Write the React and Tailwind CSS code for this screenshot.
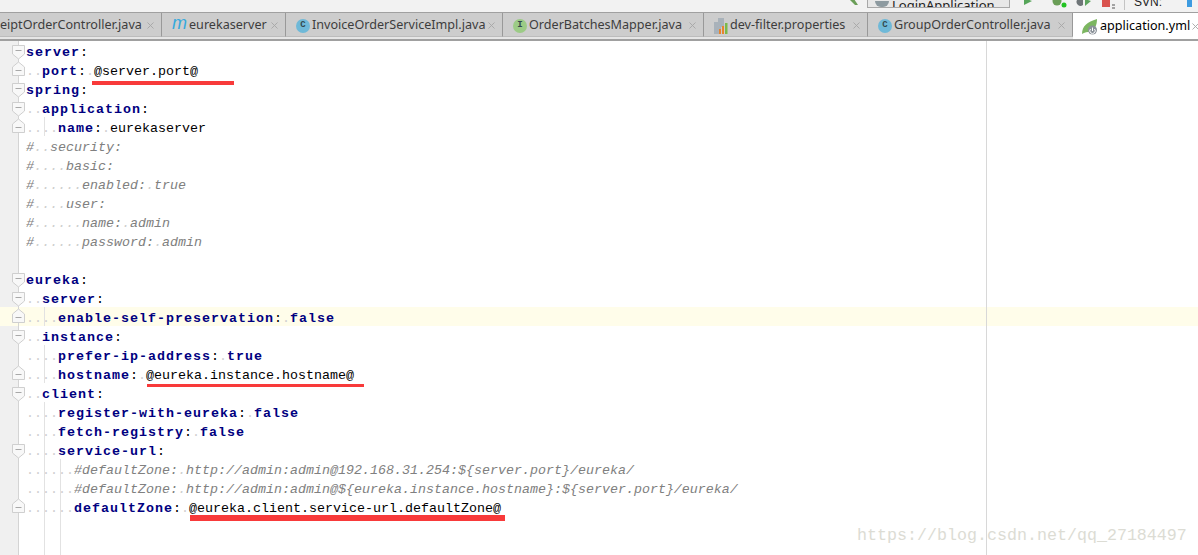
import { X } from "lucide-react";

const tabs = [
  { label: "eiptOrderController.java", width: "w-[162px]", icon: null },
  { label: "eurekaserver", width: "w-[124px]", icon: "m" },
  { label: "InvoiceOrderServiceImpl.java", width: "w-[217px]", icon: "c" },
  { label: "OrderBatchesMapper.java", width: "w-[201px]", icon: "i" },
  { label: "dev-filter.properties", width: "w-[164px]", icon: "props" },
  { label: "GroupOrderController.java", width: "w-[205px]", icon: "c" },
  { label: "application.yml", width: "w-[125px]", icon: "spring", active: true },
];

// fold: "open" points down, "close" points up
const rows = [
  { key: "server", fold: "open" },
  { indent: 2, key: "port", value: "@server.port@", fold: "close" },
  { key: "spring", fold: "open" },
  { indent: 2, key: "application", fold: "open" },
  { indent: 4, key: "name", value: "eurekaserver", fold: "close" },
  { comment: "#  security:" },
  { comment: "#    basic:" },
  { comment: "#      enabled: true" },
  { comment: "#    user:" },
  { comment: "#      name: admin" },
  { comment: "#      password: admin" },
  {},
  { key: "eureka", fold: "open" },
  { indent: 2, key: "server", fold: "open" },
  { indent: 4, key: "enable-self-preservation", literal: "false", fold: "close", current: true },
  { indent: 2, key: "instance", fold: "open" },
  { indent: 4, key: "prefer-ip-address", literal: "true" },
  { indent: 4, key: "hostname", value: "@eureka.instance.hostname@", fold: "close" },
  { indent: 2, key: "client", fold: "open" },
  { indent: 4, key: "register-with-eureka", literal: "false" },
  { indent: 4, key: "fetch-registry", literal: "false" },
  { indent: 4, key: "service-url", fold: "open" },
  { indent: 6, comment: "#defaultZone: http://admin:admin@192.168.31.254:${server.port}/eureka/" },
  { indent: 6, comment: "#defaultZone: http://admin:admin@${eureka.instance.hostname}:${server.port}/eureka/" },
  { indent: 6, key: "defaultZone", value: "@eureka.client.service-url.defaultZone@", fold: "close" },
];

function Dots({ count }) {
  return <span className="text-[#d0d0d0]">{".".repeat(count)}</span>;
}

function TabIcon({ type }) {
  if (type === "c" || type === "i") {
    const bg = type === "c" ? "bg-[#6fb9d8]" : "bg-[#9ccb86]";
    return (
      <span className={`w-[14px] h-[14px] rounded-full ${bg} flex items-center justify-center text-[9px] font-bold leading-none text-[#33494f] font-['Liberation_Mono',monospace]`}>
        {type === "c" ? "C" : "I"}
      </span>
    );
  }
  if (type === "m") {
    return <span className="w-[15px] text-[18px] leading-none -mt-[5px] italic text-[#35a9dd] font-['Liberation_Sans',sans-serif]">m</span>;
  }
  if (type === "props") {
    return (
      <svg width="14" height="16" viewBox="0 0 14 16">
        <path d="M0 4 L4 4 L4 0 L10 0 L10 9 L7 9 L7 16 L0 16 Z" fill="#a9b2ba" />
        <rect x="5" y="11" width="2" height="5" fill="#e8842c" />
        <rect x="8" y="8" width="2" height="8" fill="#e8842c" />
        <rect x="11" y="5" width="2.5" height="11" fill="#7cb94a" />
      </svg>
    );
  }
  if (type === "spring") {
    return (
      <svg width="16" height="16" viewBox="0 0 16 16">
        <path d="M0 15 C0 7 5 3 15 0 C15 6 13 12 6 13 C3 13 2 14 0 15 Z" fill="#7cb661" />
        <circle cx="10.5" cy="11" r="4.5" fill="#8b9299" />
        <path d="M10.5 8.5 V12 M8.5 10 A2.7 2.7 0 1 0 12.5 10" stroke="#fff" strokeWidth="1" fill="none" />
      </svg>
    );
  }
  return null;
}

function Tab({ tab }) {
  const look = tab.active
    ? "bg-white text-black h-[26px] pt-[1px]"
    : "bg-[#cdcdcd] text-[#3d3d3d] border-r border-[#999999] border-b border-b-[#bcbcbc] h-[24px] pt-[2px]";
  return (
    <div className={`${tab.width} ${look} shrink-0 flex items-center overflow-hidden`}>
      {tab.icon && (
        <span className={`${tab.active ? "ml-[9px]" : "ml-[10px]"} mr-[2px] flex items-center`}>
          <TabIcon type={tab.icon} />
        </span>
      )}
      <span className="whitespace-nowrap">{tab.label}</span>
      <X size={11} strokeWidth={2} className="ml-auto mr-[5px] shrink-0 text-[#a6a6a6]" />
    </div>
  );
}

function Toolbar() {
  return (
    <div className="h-[12px] bg-[#f2f2f2] border-b border-[#a0a0a0] box-content overflow-hidden flex items-start pl-[848px]">
      <svg width="12" height="8" viewBox="0 0 12 8" className="mt-[-2px]">
        <path d="M1 1 L7 7 L10 7 L6 1 Z" fill="#6b9e58" />
      </svg>
      <div className="ml-[7px] w-[143px] h-[9px] -mt-[1px] border border-[#a8a8a8] bg-[#e8e8e8] flex items-end overflow-hidden pl-[7px]">
        <span className="w-[14px] h-[6px] bg-[#8d9aa0] rounded-b-full" />
        <span className="ml-[3px] text-[13px] leading-[16px] -mb-[6px] text-[#222] whitespace-nowrap">LoginApplication</span>
      </div>
      <svg width="10" height="6" viewBox="0 0 10 6" className="ml-[13px]">
        <path d="M1 -2 L9 1 L1 5 Z" fill="#56a559" />
      </svg>
      <svg width="18" height="8" viewBox="0 0 18 8" className="ml-[18px]">
        <circle cx="6" cy="1" r="4.5" fill="#6b9e58" />
        <circle cx="13" cy="5" r="2.5" fill="#22c322" />
      </svg>
      <svg width="16" height="7" viewBox="0 0 16 7" className="ml-[7px]">
        <path d="M1 0 A4 4 0 0 0 7 5 L7 0 Z" fill="#6f7578" />
        <path d="M9 -1 L15 1 L9 6 Z" fill="#5da45e" />
      </svg>
      <svg width="14" height="9" viewBox="0 0 14 9" className="ml-[10px]">
        <rect x="0" y="0" width="8" height="7" fill="#d9534f" />
        <path d="M10 5 H13 M10 8 H13" stroke="#555" strokeWidth="1" />
      </svg>
      <span className="ml-[8px] w-px h-[10px] bg-[#c4c4c4]" />
      <span className="ml-[9px] text-[12px] leading-[10px] -mt-[3px] text-[#222] font-['Liberation_Sans',sans-serif]">SVN:</span>
      <span className="ml-[25px] w-[5px] h-[7px] bg-[#3d9be0]" />
    </div>
  );
}

function FoldMark({ fold }) {
  if (fold === "open") {
    return (
      <svg width="13" height="15" viewBox="0 0 13 15" className="absolute left-[12px] top-[4px]">
        <path d="M0.5 0.5 H12.5 V9 L6.5 14 L0.5 9 Z" fill="#f8f8f8" stroke="#cfcfcf" />
        <path d="M3.5 5.5 H9.5" stroke="#a8a8a8" />
      </svg>
    );
  }
  return (
    <svg width="13" height="15" viewBox="0 0 13 15" className="absolute left-[12px] top-[1px]">
      <path d="M0.5 14.5 H12.5 V6 L6.5 1 L0.5 6 Z" fill="#f8f8f8" stroke="#cfcfcf" />
      <path d="M3.5 9.5 H9.5" stroke="#a8a8a8" />
    </svg>
  );
}

function Comment({ text }) {
  return (
    <span className="italic text-[#808080]">
      {text.split(/( +)/).map((part, i) =>
        part.startsWith(" ") ? <Dots key={i} count={part.length} /> : <span key={i}>{part}</span>,
      )}
    </span>
  );
}

function Row({ row }) {
  const indent = row.indent || 0;
  return (
    <div className={`relative h-[19px] flex ${row.current ? "bg-[#fffdea]" : ""}`}>
      <div className={`w-[19px] shrink-0 border-r border-[#d4d4d4] ${row.current ? "" : "bg-[#f0f0f0]"}`} />
      {row.fold && <FoldMark fold={row.fold} />}
      {indent >= 4 && <span className="absolute left-[44px] top-0 bottom-0 w-px bg-[#e2e2e2]" />}
      {indent >= 6 && <span className="absolute left-[60px] top-0 bottom-0 w-px bg-[#e2e2e2]" />}
      <div className="pl-[7px] pt-[2px] whitespace-pre">
        {indent > 0 && <Dots count={indent} />}
        {row.comment && <Comment text={row.comment} />}
        {row.key && <span className="font-bold tracking-[1px] text-[#000080]">{row.key}</span>}
        {row.key && <span className="text-black">:</span>}
        {(row.value || row.literal) && <Dots count={1} />}
        {row.value && <span className="text-black">{row.value}</span>}
        {row.literal && <span className="font-bold tracking-[1px] text-[#000080]">{row.literal}</span>}
      </div>
    </div>
  );
}

export default function App() {
  return (
    <div className="w-[1198px] h-[555px] overflow-hidden bg-white flex flex-col">
      <Toolbar />
      <div className="h-[28px] bg-[#e6e6e6] border-b-2 border-[#a0a0a0] flex items-start text-[12.6px] font-['Noto_Sans',sans-serif]">
        {tabs.map((tab) => (
          <Tab key={tab.label} tab={tab} />
        ))}
      </div>

      <div className="relative flex-1 flex flex-col text-[13.33px] leading-[19px] font-['Liberation_Mono',monospace]">
        {rows.map((row, i) => (
          <Row key={i} row={row} />
        ))}
        <div className="relative flex-1">
          <div className="w-[19px] h-full bg-[#f0f0f0] border-r border-[#d4d4d4]" />
          <span className="absolute left-[44px] top-0 bottom-0 w-px bg-[#e2e2e2]" />
          <span className="absolute left-[60px] top-0 bottom-0 w-px bg-[#e2e2e2]" />
        </div>

        <span className="absolute left-[986px] top-0 bottom-0 w-px bg-[#d8d8d8]" />

        {/* red marks drawn over the screenshot */}
        <span className="absolute left-[92px] top-[40px] w-[142px] h-[4px] bg-[#f83a3a]" />
        <span className="absolute left-[147px] top-[343px] w-[217px] h-[3px] bg-[#f83a3a]" />
        <span className="absolute left-[190px] top-[474px] w-[315px] h-[6px] bg-[#f83a3a]" />

        <span className="absolute left-[857px] top-[485px] text-[16.67px] leading-[20px] text-[#dcdcd4]">
          https://blog.csdn.net/qq_27184497
        </span>
      </div>
    </div>
  );
}
